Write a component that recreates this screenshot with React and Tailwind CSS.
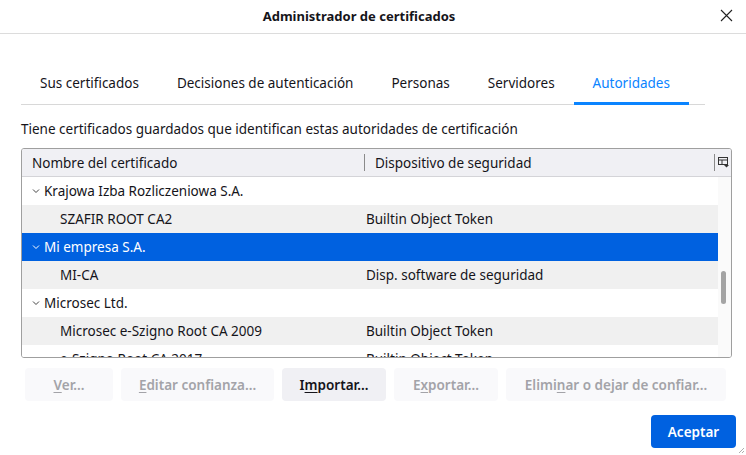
import { useState } from "react";

const tabs = [
  "Sus certificados",
  "Decisiones de autenticación",
  "Personas",
  "Servidores",
  "Autoridades",
];

const rows = [
  { name: "Krajowa Izba Rozliczeniowa S.A.", group: true },
  { name: "SZAFIR ROOT CA2", device: "Builtin Object Token" },
  { name: "Mi empresa S.A.", group: true, selected: true },
  { name: "MI-CA", device: "Disp. software de seguridad" },
  { name: "Microsec Ltd.", group: true },
  { name: "Microsec e-Szigno Root CA 2009", device: "Builtin Object Token" },
  { name: "e-Szigno Root CA 2017", device: "Builtin Object Token" },
];

const Chevron = ({ color }) => (
  <svg width="8" height="8" viewBox="0 0 8 8" className="shrink-0">
    <path d="M1 2.5 L4 5.5 L7 2.5" fill="none" stroke={color} strokeWidth="1" />
  </svg>
);

const ColumnPicker = () => (
  <svg width="11" height="11" viewBox="0 0 11 11">
    <rect x="0.5" y="0.5" width="9" height="7" fill="none" stroke="#333" strokeWidth="1" />
    <path d="M0.5 3 H9.5 M4 3 V7.5" stroke="#333" strokeWidth="1" />
    <path d="M6 8 H11 L8.5 10.5 Z" fill="#333" />
  </svg>
);

const Btn = ({ pre, u, post, disabled, className = "" }) => (
  <button
    className={`h-[33px] rounded-[4px] px-4 text-[13.5px] font-semibold whitespace-nowrap ${
      disabled ? "bg-[#f9f9fb] text-[#a3a3a8]" : "bg-[#f0f0f4] text-[#15141a]"
    } ${className}`}
  >
    {pre}
    <span className="underline underline-offset-2">{u}</span>
    {post}
  </button>
);

export default function App() {
  const [active] = useState(4);

  return (
    <div
      className="w-[746px] h-[455px] bg-white text-[#15141a] overflow-hidden relative"
      style={{ fontFamily: '"Noto Sans", "Open Sans", sans-serif' }}
    >
      <div className="h-[34px] border-b border-[#dcdcdc] flex items-center justify-center pr-[28px] relative">
        <span className="text-[13px] font-bold">Administrador de certificados</span>
        <svg
          width="13"
          height="13"
          viewBox="0 0 13 13"
          className="absolute right-[13px] top-[9px]"
        >
          <path d="M1 1 L12 12 M12 1 L1 12" stroke="#222" strokeWidth="1.1" />
        </svg>
      </div>

      <div className="pl-[21px] pr-[41px] pt-[28px]">
        <div className="flex border-b border-[#d8d8d8]">
          {tabs.map((t, i) => (
            <div
              key={t}
              className={`h-[42px] px-[19px] shrink-0 whitespace-nowrap flex items-center text-[13.5px] relative ${
                i === active ? "text-[#0a84ff]" : ""
              }`}
            >
              {t}
              {i === active && (
                <div className="absolute left-0 right-0 bottom-[-1px] h-[3px] bg-[#0a84ff]" />
              )}
            </div>
          ))}
        </div>
      </div>

      <div className="px-[21px] pt-[14px] text-[13.5px]">
        Tiene certificados guardados que identifican estas autoridades de certificación
      </div>

      <div className="mx-[21px] mt-[9px] w-[711px] h-[210px] border border-[#9f9f9f] rounded-[3px] overflow-hidden flex flex-col text-[13.5px]">
        <div className="h-[28px] shrink-0 bg-[#f0f0f4] border-b border-[#d4d4d8] flex items-center">
          <div className="w-[342px] pl-[10px]">Nombre del certificado</div>
          <div className="w-px h-[17px] bg-[#8a8a8a]" />
          <div className="flex-1 pl-[10px]">Dispositivo de seguridad</div>
          <div className="w-px h-[17px] bg-[#8a8a8a]" />
          <div className="w-[16px] flex justify-center">
            <ColumnPicker />
          </div>
        </div>
        <div className="flex flex-1 min-h-0">
          <div className="flex-1 overflow-hidden">
            {rows.map((r, i) => (
              <div
                key={r.name}
                className={`h-[28px] flex items-center whitespace-nowrap ${
                  r.selected
                    ? "bg-[#0061e0] text-white"
                    : i % 2 === 1
                    ? "bg-[#f0f0f0]"
                    : "bg-white"
                }`}
              >
                {r.group ? (
                  <div className="flex items-center pl-[10px] gap-[4px]">
                    <Chevron color={r.selected ? "#fff" : "#444"} />
                    <span>{r.name}</span>
                  </div>
                ) : (
                  <>
                    <div className="w-[344px] pl-[38px]">{r.name}</div>
                    <div>{r.device}</div>
                  </>
                )}
              </div>
            ))}
          </div>
          <div className="w-[13px] bg-[#fafafa] relative">
            <div className="absolute left-[3px] top-[94px] w-[5px] h-[33px] rounded-full bg-[#a4a4a4]" />
          </div>
        </div>
      </div>

      <div className="flex gap-[8px] pl-[25px] mt-[10px]">
        <Btn disabled u="V" post="er..." className="w-[88px]" />
        <Btn disabled u="E" post="ditar confianza..." className="w-[153px]" />
        <Btn pre="I" u="m" post="portar..." className="w-[104px]" />
        <Btn disabled pre="E" u="x" post="portar..." className="w-[104px]" />
        <Btn disabled pre="Elimi" u="n" post="ar o dejar de confiar..." className="w-[220px]" />
      </div>

      <div className="flex justify-end pr-[10px] mt-[14px]">
        <button className="h-[33px] w-[85px] rounded-[4px] bg-[#0061e0] text-white text-[13.5px] font-semibold">
          Aceptar
        </button>
      </div>

      <svg width="8" height="8" viewBox="0 0 8 8" className="absolute right-[1px] bottom-[1px]">
        <path d="M7 2 L2 7 M7 5 L5 7" stroke="#999" strokeWidth="0.8" />
      </svg>
    </div>
  );
}
